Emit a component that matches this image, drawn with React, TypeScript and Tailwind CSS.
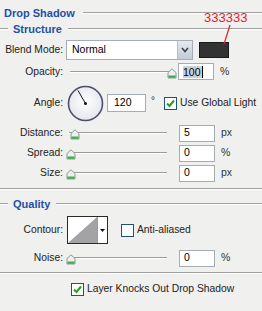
import React from 'react';

const font = { fontFamily: '"Liberation Sans", Tahoma, sans-serif' };

const Thumb = () => (
  <svg width="10" height="11" viewBox="0 0 10 11" className="absolute -top-[5px]">
    <path d="M1 4.5 L5 0.8 L9 4.5 L9 10 L1 10 Z" fill="#eef0ee" stroke="#8a9a8c" strokeWidth="1" />
    <rect x="1.5" y="7.5" width="7" height="2.3" fill="#3fae49" />
  </svg>
);

const Slider = ({ thumb, width = 98 }: { thumb: number; width?: number }) => (
  <div className="relative h-[2px]" style={{ width }}>
    <div className="h-px bg-[#9c9c9c]" />
    <div className="h-px bg-white" />
    <div className="absolute" style={{ left: thumb }}>
      <div className="relative">
        <Thumb />
      </div>
    </div>
  </div>
);

const NumInput = ({ value, selected }: { value: string; selected?: boolean }) => (
  <div className="w-[36px] h-[17px] bg-white border border-[#a5acb5] flex items-center pl-[4px] text-[10.5px] text-black">
    {selected ? (
      <span className="bg-[#c8d0dc] leading-[12px] pr-px border-r border-black">{value}</span>
    ) : (
      value
    )}
  </div>
);

const Check = ({ checked }: { checked?: boolean }) => (
  <div className="w-[13px] h-[13px] bg-white border border-[#1c5180] flex items-center justify-center">
    {checked && (
      <svg width="9" height="9" viewBox="0 0 9 9">
        <path d="M1 4.5 L3.5 7 L8 1.5" fill="none" stroke="#21a121" strokeWidth="2" />
      </svg>
    )}
  </div>
);

const Etched = ({ className = '' }: { className?: string }) => (
  <div className={`flex-1 ${className}`}>
    <div className="h-px bg-[#a0a0a0]" />
    <div className="h-px bg-white" />
  </div>
);

const label = 'w-[63px] text-right text-[10.3px] text-[#222] whitespace-nowrap';

const SliderRow = ({ name, thumb, value, unit }: { name: string; thumb: number; value: string; unit: string }) => (
  <div className="flex items-center h-[18px]">
    <div className={label}>{name}</div>
    <div className="ml-[6px] w-[107px]">
      <Slider thumb={thumb} />
    </div>
    <div className="ml-[3px]">
      <NumInput value={value} />
    </div>
    <div className="ml-[6px] text-[10.5px] text-[#333]">{unit}</div>
  </div>
);

export default function App() {
  return (
    <div className="relative w-[262px] h-[311px] bg-[#f0f0ee] overflow-hidden select-none" style={font}>
      {/* Drop Shadow */}
      <div className="flex items-center h-[18px] mt-[4px] pl-[4px]">
        <span className="text-[11px] font-bold text-[#1f4fa8]">Drop Shadow</span>
        <Etched className="ml-[8px]" />
      </div>
      {/* Structure */}
      <div className="flex items-center h-[14px]">
        <div className="w-[8px]">
          <div className="h-px bg-[#a0a0a0]" />
          <div className="h-px bg-white" />
        </div>
        <span className="ml-[5px] text-[11px] font-bold text-[#1f4fa8]">Structure</span>
        <Etched className="ml-[6px]" />
      </div>

      {/* Blend Mode */}
      <div className="flex items-center h-[20px] mt-[4px]">
        <div className={label}>Blend Mode:</div>
        <div className="ml-[3px] w-[127px] h-[20px] bg-white border border-[#a5acb5] flex items-center">
          <span className="flex-1 pl-[5px] text-[10.5px] text-black">Normal</span>
          <div className="w-[15px] h-[18px] bg-gradient-to-b from-[#e6e9ef] to-[#c4cbd6] border-l border-[#b5bcc7] flex items-center justify-center">
            <svg width="8" height="6" viewBox="0 0 8 6">
              <path d="M1 1 L4 4.5 L7 1" fill="none" stroke="#3c4250" strokeWidth="1.6" />
            </svg>
          </div>
        </div>
        <div className="ml-[6px] w-[30px] h-[16px] bg-[#333333] border border-[#1a1a1a]" />
      </div>

      {/* Opacity */}
      <div className="flex items-center h-[19px] mt-[2px]">
        <div className={label}>Opacity:</div>
        <div className="ml-[7px] w-[106px]">
          <Slider thumb={97} width={100} />
        </div>
        <div className="ml-[2px]">
          <NumInput value="100" selected />
        </div>
        <div className="ml-[6px] text-[10.5px] text-[#333]">%</div>
      </div>

      {/* Angle */}
      <div className="flex items-center h-[36px] mt-[4px]">
        <div className={label}>Angle:</div>
        <svg width="37" height="37" viewBox="0 0 37 37" className="ml-[4px]">
          <defs>
            <radialGradient id="dial" cx="50%" cy="45%" r="55%">
              <stop offset="0%" stopColor="#ffffff" />
              <stop offset="100%" stopColor="#e4e6ec" />
            </radialGradient>
          </defs>
          <circle cx="18.5" cy="18.5" r="17" fill="url(#dial)" stroke="#4b4e6e" strokeWidth="1.6" />
          <line x1="18.5" y1="18.5" x2="11" y2="5.5" stroke="#111" strokeWidth="1" />
          <circle cx="18.5" cy="18.5" r="1.5" fill="#111" />
        </svg>
        <div className="ml-[3px] w-[39px] h-[18px] bg-white border border-[#a5acb5] flex items-center pl-[6px] text-[10.5px] text-black">120</div>
        <div className="ml-[5px] -mt-[6px] text-[10px] text-[#333]">°</div>
        <div className="ml-[9px]">
          <Check checked />
        </div>
        <span className="ml-[3px] text-[10.3px] text-[#222] whitespace-nowrap">Use Global Light</span>
      </div>

      <div className="mt-[3px] flex flex-col gap-[2px]">
        <SliderRow name="Distance:" thumb={1} value="5" unit="px" />
        <SliderRow name="Spread:" thumb={-3} value="0" unit="%" />
        <SliderRow name="Size:" thumb={-3} value="0" unit="px" />
      </div>

      <div className="mt-[6px] flex">
        <Etched />
      </div>

      {/* Quality */}
      <div className="flex items-center h-[14px] mt-[7px]">
        <div className="w-[8px]">
          <div className="h-px bg-[#a0a0a0]" />
          <div className="h-px bg-white" />
        </div>
        <span className="ml-[5px] text-[11px] font-bold text-[#1f4fa8]">Quality</span>
        <Etched className="ml-[6px]" />
      </div>

      {/* Contour */}
      <div className="flex items-center h-[28px] mt-[5px]">
        <div className={label}>Contour:</div>
        <div className="ml-[4px] w-[41px] h-[28px] border border-[#2a2a2a] bg-white flex">
          <svg width="29" height="26" viewBox="0 0 29 26">
            <path d="M0 26 L29 0 L29 26 Z" fill="#a3a3a5" />
          </svg>
          <div className="flex-1 border-l border-[#9a9a9a] flex items-center justify-center">
            <svg width="5" height="3" viewBox="0 0 5 3">
              <path d="M0 0 L5 0 L2.5 3 Z" fill="#111" />
            </svg>
          </div>
        </div>
        <div className="ml-[13px]">
          <Check />
        </div>
        <span className="ml-[3px] text-[10.3px] text-[#222]">Anti-aliased</span>
      </div>

      {/* Noise */}
      <div className="mt-[5px]">
        <SliderRow name="Noise:" thumb={-3} value="0" unit="%" />
      </div>

      <div className="mt-[5px] flex">
        <Etched />
      </div>

      <div className="flex items-center h-[14px] mt-[8px] pl-[71px]">
        <Check checked />
        <span className="ml-[3px] text-[10.3px] text-[#222] whitespace-nowrap">Layer Knocks Out Drop Shadow</span>
      </div>

      {/* annotation */}
      <div className="absolute left-[204px] top-[11px] text-[13px] leading-[14px] text-[#e8202a]" style={{ fontFamily: '"Liberation Sans", Arial, sans-serif' }}>
        333333
      </div>
      <svg className="absolute left-[220px] top-[24px]" width="14" height="22" viewBox="0 0 14 22">
        <line x1="10" y1="1" x2="4" y2="20" stroke="#e8202a" strokeWidth="1.2" />
      </svg>
    </div>
  );
}
